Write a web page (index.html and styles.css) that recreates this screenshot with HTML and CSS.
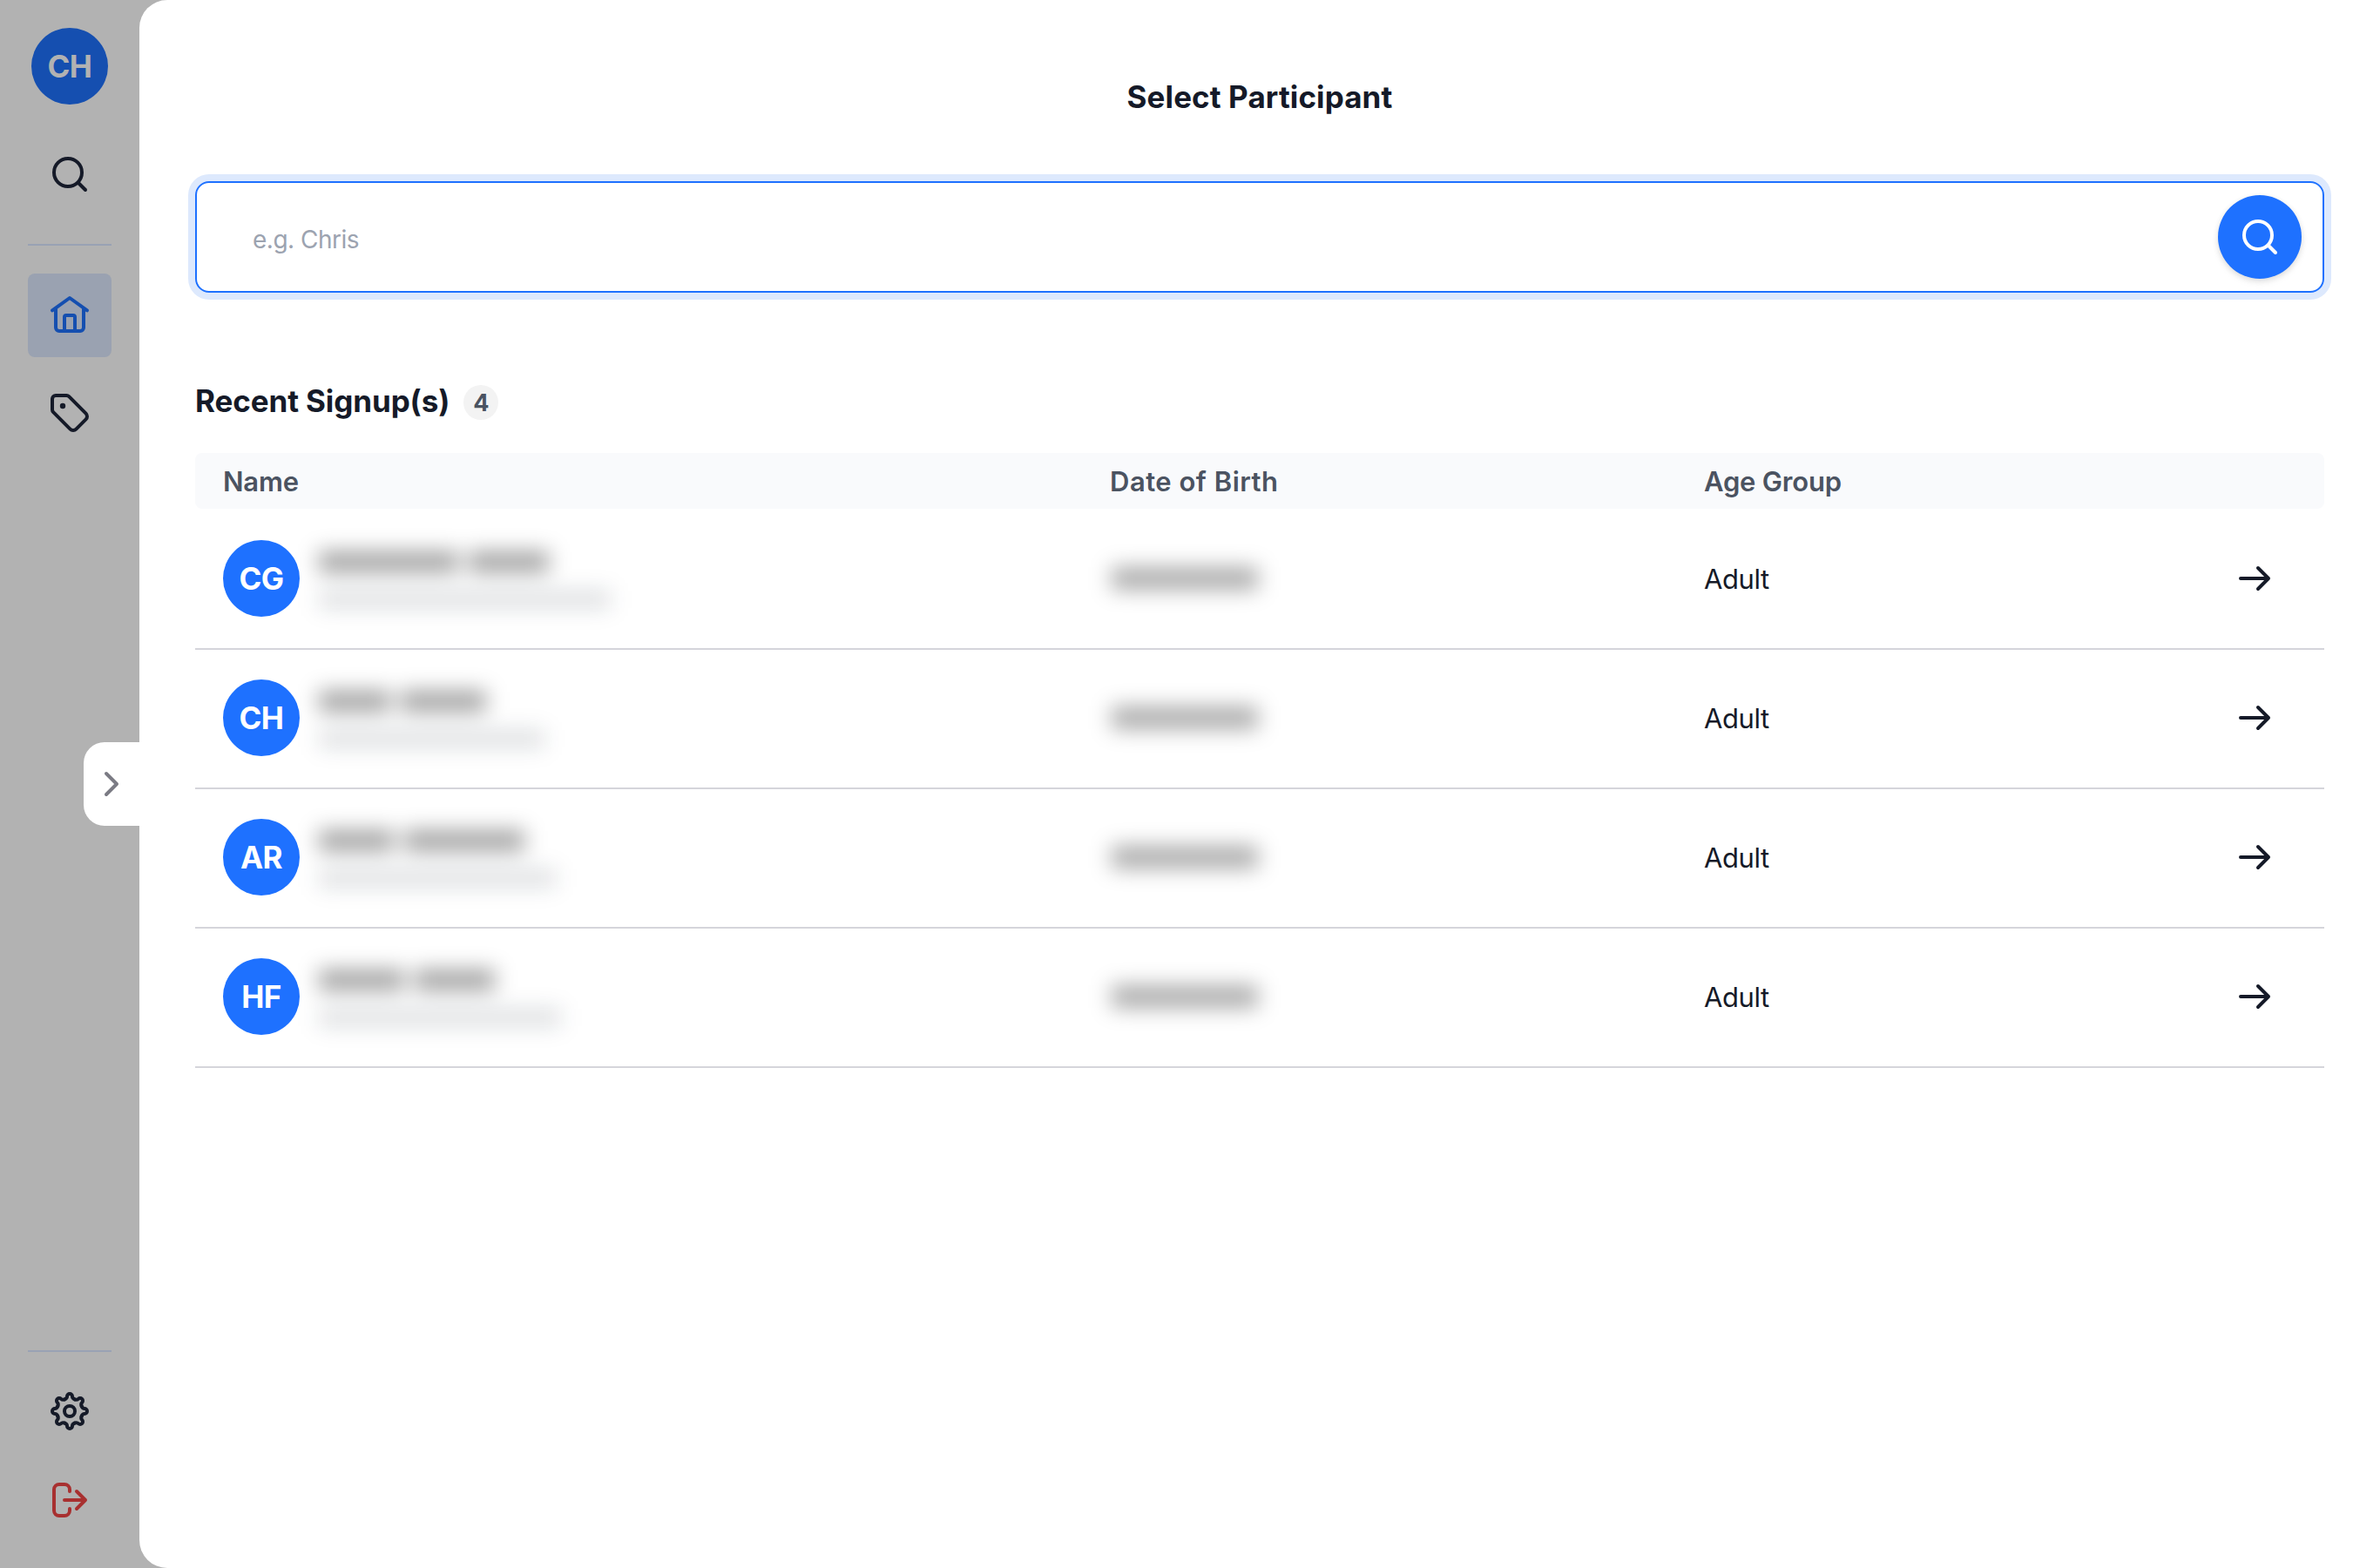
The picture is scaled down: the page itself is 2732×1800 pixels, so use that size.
FILE: index.html
```html
<!DOCTYPE html>
<html lang="en">
<head>
<meta charset="utf-8">
<title>Select Participant</title>
<link rel="stylesheet" href="styles.css">
</head>
<body>
<svg class="defs" aria-hidden="true">
  <symbol id="search" viewBox="0 0 24 24"><circle cx="11" cy="11" r="8"/><path d="M17 17l4 4"/></symbol>
  <symbol id="arrow" viewBox="0 0 24 24"><path d="M4 12h16M14 6l6 6-6 6"/></symbol>
  <symbol id="chevron" viewBox="0 0 24 24"><path d="M9 6l6 6-6 6"/></symbol>
  <symbol id="home" viewBox="0 0 24 24"><path d="M2 9.2 12 2l10 7.200M4 8v11a2 2 0 0 0 2 2h12a2 2 0 0 0 2-2V8M9 21v-8a1 1 0 0 1 1-1h4a1 1 0 0 1 1 1v8"/></symbol>
  <symbol id="tag" viewBox="0 0 24 24"><path d="M4 2h6.170a2 2 0 0 1 1.420.590l9.700 9.700a2.400 2.400 0 0 1 0 3.400l-5.600 5.600a2.400 2.400 0 0 1-3.400 0l-9.700-9.700A2 2 0 0 1 2 10.170V4a2 2 0 0 1 2-2z"/><circle class="dot" cx="8" cy="8" r="1.600"/></symbol>
  <symbol id="gear" viewBox="-12 -12 24 24">
    <circle r="3"/>
    <g id="teeth">
      <path id="tooth" d="M-2.830-6.840C-1.950-7.200-1.500-7.600-1.500-8.500a1.500 1.500 0 0 1 3 0C1.500-7.600 1.950-7.200 2.830-6.840"/>
      <use href="#tooth" transform="rotate(45)"/><use href="#tooth" transform="rotate(90)"/><use href="#tooth" transform="rotate(135)"/><use href="#tooth" transform="rotate(180)"/><use href="#tooth" transform="rotate(225)"/><use href="#tooth" transform="rotate(270)"/><use href="#tooth" transform="rotate(315)"/>
    </g>
  </symbol>
  <symbol id="logout" viewBox="0 0 24 24"><path d="M12 7V6a3 3 0 0 0-3-3H6a3 3 0 0 0-3 3v12a3 3 0 0 0 3 3h3a3 3 0 0 0 3-3v-1M9 12h12M16 7l5 5-5 5"/></symbol>
</svg>
<div class="app">
  <nav class="sidebar">
    <div class="avatar dim">CH</div>
    <a class="nav-item first"><svg class="icon"><use href="#search"/></svg></a>
    <div class="rule"></div>
    <a class="nav-item active"><svg class="icon"><use href="#home"/></svg></a>
    <a class="nav-item tag"><svg class="icon"><use href="#tag"/></svg></a>
    <div class="rule bottom"></div>
    <a class="nav-item settings"><svg class="icon"><use href="#gear"/></svg></a>
    <a class="nav-item logout"><svg class="icon"><use href="#logout"/></svg></a>
  </nav>
  <main class="panel">
    <button class="handle" aria-label="Close panel"><svg class="icon"><use href="#chevron"/></svg></button>
    <h1 class="title"><span>Select Participant</span></h1>
    <div class="search">
      <span class="placeholder">e.g. Chris</span>
      <button class="search-btn" aria-label="Search"><svg class="icon"><use href="#search"/></svg></button>
    </div>
    <div class="section">
      <h2 class="heading">Recent Signup(s)</h2>
      <span class="count">4</span>
    </div>
    <div class="grid head"><span class="th">Name</span><span class="th dob">Date of Birth</span><span class="th age">Age Group</span></div>
    <div class="grid row">
      <div class="person"><div class="avatar">CG</div><div class="redacted"><div class="words"><i style="width:160px"></i><i style="width:92px"></i></div><i class="mail" style="width:335px"></i></div></div>
      <div class="redacted"><i class="date"></i></div>
      <span class="adult">Adult</span><svg class="icon"><use href="#arrow"/></svg>
    </div>
    <div class="grid row">
      <div class="person"><div class="avatar">CH</div><div class="redacted"><div class="words"><i style="width:82px"></i><i style="width:98px"></i></div><i class="mail" style="width:259px"></i></div></div>
      <div class="redacted"><i class="date"></i></div>
      <span class="adult">Adult</span><svg class="icon"><use href="#arrow"/></svg>
    </div>
    <div class="grid row">
      <div class="person"><div class="avatar">AR</div><div class="redacted"><div class="words"><i style="width:86px"></i><i style="width:138px"></i></div><i class="mail" style="width:272px"></i></div></div>
      <div class="redacted"><i class="date"></i></div>
      <span class="adult">Adult</span><svg class="icon"><use href="#arrow"/></svg>
    </div>
    <div class="grid row">
      <div class="person"><div class="avatar">HF</div><div class="redacted"><div class="words"><i style="width:98px"></i><i style="width:92px"></i></div><i class="mail" style="width:278px"></i></div></div>
      <div class="redacted"><i class="date"></i></div>
      <span class="adult">Adult</span><svg class="icon"><use href="#arrow"/></svg>
    </div>
  </main>
</div>
</body>
</html>
```
FILE: styles.css
```css
* { box-sizing: border-box; margin: 0; padding: 0; }
body { font-family: Inter, "Liberation Sans", sans-serif; color: #151a28; background: #b2b2b2; }
.defs { position: absolute; width: 0; height: 0; }
button { border: 0; font: inherit; }
.app { display: flex; width: 2732px; height: 1800px; overflow: hidden; }

.icon { display: block; flex: none; width: 48px; height: 48px; fill: none; stroke: currentColor; stroke-width: 2; stroke-linecap: round; stroke-linejoin: round; }
.dot { fill: currentColor; stroke: none; }

.sidebar { display: flex; flex-direction: column; align-items: center; width: 160px; padding: 32px 0 30px; }
.avatar { display: flex; align-items: center; justify-content: center; flex: none; width: 88px; height: 88px; padding-bottom: 1px; border-radius: 50%; background: #1e71ff; color: #fff; font-size: 35px; line-height: 44px; font-weight: 650; letter-spacing: -0.5px; }
.avatar.dim { background: #154fb0; color: #b2b2b2; }
.nav-item { display: flex; align-items: center; justify-content: center; flex: none; width: 96px; height: 96px; border-radius: 8px; }
.first { margin-top: 32px; }
.rule { flex: none; width: 96px; height: 2px; margin: 32px 0; background: #99a2b4; }
.active { background: #9aa2b1; color: #154fb0; }
.tag { margin-top: 16px; }
.rule.bottom { margin: auto 0 20px; }
.logout { margin-top: 6px; color: #a83030; }

.panel { position: relative; flex: 1; padding: 80px 64px 0; background: #fff; border-radius: 32px 0 0 32px; }
.handle { position: absolute; left: -64px; top: 852px; display: flex; align-items: center; width: 64px; height: 96px; padding-left: 8px; border-radius: 24px 0 0 24px; background: #fff; color: #7b7b84; }
.title { height: 64px; text-align: center; font-size: 35px; line-height: 62px; font-weight: 650; letter-spacing: 0.1px; }
.search { display: flex; align-items: center; justify-content: space-between; height: 128px; margin-top: 64px; padding: 0 24px 0 64px; border: 2px solid #1e71ff; border-radius: 16px; box-shadow: 0 0 0 8px #dde9fd; }
.placeholder { padding-top: 5px; font-size: 28px; line-height: 40px; letter-spacing: -0.5px; color: #9ca3b0; }
.search-btn { display: flex; align-items: center; justify-content: center; width: 96px; height: 96px; border-radius: 50%; background: #1e71ff; color: #fff; box-shadow: 0 2px 6px rgba(0, 0, 0, 0.1), 0 4px 10px rgba(0, 0, 0, 0.06); }
.section { display: flex; align-items: center; gap: 16px; height: 48px; margin-top: 102px; }
.heading { padding-bottom: 4px; font-size: 35px; line-height: 44px; font-weight: 650; letter-spacing: -0.1px; }
.count { width: 40px; height: 40px; border-radius: 50%; background: #f3f3f3; color: #4b5361; text-align: center; font-size: 27px; line-height: 41px; font-weight: 650; }

.grid { display: grid; grid-template-columns: 1018px 682px 608px 48px; align-items: center; padding-left: 32px; }
.head { height: 64px; margin-top: 34px; border-radius: 8px; background: #f9fafc; }
.th { padding-top: 2px; font-size: 31px; line-height: 40px; font-weight: 630; letter-spacing: -0.2px; color: #4b5361; }
.th.dob { letter-spacing: 0.5px; }
.row { height: 160px; padding-bottom: 2px; border-bottom: 2px solid #d5d5db; }
.head + .row { height: 162px; padding-top: 2px; }
.adult { padding-top: 2px; font-size: 31px; line-height: 40px; letter-spacing: -0.4px; }
.person { display: flex; align-items: center; gap: 22px; }

/* Personal data is masked with blurred bars */
.redacted { filter: blur(12px); }
.redacted i { display: block; height: 24px; background: rgba(0, 0, 0, 0.37); }
.words { display: flex; gap: 12px; margin-top: 4px; }
.redacted .mail { height: 22px; margin-top: 20px; background: rgba(10, 20, 40, 0.13); }
.redacted .date { width: 168px; height: 26px; margin-left: 2px; background: rgba(0, 0, 0, 0.33); }
```
